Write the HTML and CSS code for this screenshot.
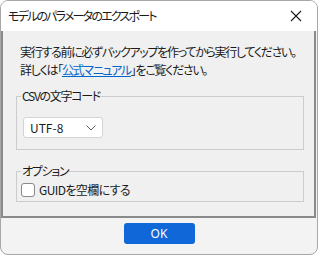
FILE: index.html
```html
<!DOCTYPE html>
<html>
<head>
    <title>モデルのパラメータのエクスポート</title>
    <link rel="stylesheet" href="styles.css">
</head>
<body>
    <div class="window">
        <div class="titlebar">
            <span class="title">モデルのパラメータのエクスポート</span>
            <svg class="close" width="12" height="12" viewBox="0 0 12 12">
                <path d="M1 1 L11 11 M11 1 L1 11" stroke="#1a1a1a" stroke-width="1.1" fill="none"/>
            </svg>
        </div>

        <div class="content">
            <p class="message">
                実行する前に必ずバックアップを作ってから実行してください。<br>
                詳しくは「<a href="#">公式マニュアル</a>」をご覧ください。
            </p>

            <fieldset class="group">
                <legend>CSVの文字コード</legend>
                <div class="select">
                    <span>UTF-8</span>
                    <svg width="10" height="6" viewBox="0 0 10 6">
                        <path d="M0.5 0.5 L5 5 L9.5 0.5" stroke="#606060" stroke-width="1" fill="none"/>
                    </svg>
                </div>
            </fieldset>

            <fieldset class="group options">
                <legend>オプション</legend>
                <label class="check">
                    <span class="box"></span>
                    <span class="check-text">GUIDを空欄にする</span>
                </label>
            </fieldset>
        </div>

        <div class="footer">
            <button class="ok">OK</button>
        </div>
    </div>
</body>
</html>
```

FILE: styles.css
```css
* {
    box-sizing: border-box;
}

body {
    margin: 0;
    font-family: 'Noto Sans CJK JP', 'Noto Sans', sans-serif;
    font-size: 12px;
    font-feature-settings: "palt";
    letter-spacing: -1.3px;
    color: #1a1a1a;
    background-color: #fff;
}

.window {
    width: 318px;
    height: 255px;
    border: 1px solid #a8a8a8;
    border-radius: 8px;
    overflow: hidden;
    display: flex;
    flex-direction: column;
    background-color: #f3f3f3;
}

.titlebar {
    height: 30px;
    background-color: #fff;
    display: flex;
    align-items: center;
    justify-content: space-between;
    padding: 0 15px 0 7px;
    flex-shrink: 0;
}

.title {
    font-size: 12px;
    line-height: 16px;
    letter-spacing: -1.8px;
}

.content {
    background-color: #f0f0f0;
    border: 2px solid #8a8a8a;
    border-top: none;
    margin-right: 1px;
    padding: 12px 10px 0 13px;
    height: 187px;
    flex-shrink: 0;
}

.message {
    margin: 0;
    padding-left: 4px;
    line-height: 18px;
    white-space: nowrap;
}

.message a {
    color: #0066cc;
    text-decoration: underline;
}

.group {
    border: 1px solid #cccccc;
    margin: 9px 0 0 0;
    padding: 13px 4px 11px 4px;
}

.group legend {
    padding: 0 1px;
    line-height: 16px;
}

.select {
    width: 80px;
    height: 21px;
    margin-left: 2px;
    background-color: #fff;
    border: 1px solid #d4d4d4;
    border-radius: 3px;
    display: flex;
    align-items: center;
    justify-content: space-between;
    padding: 0 6px 0 6px;
    letter-spacing: 0;
}

.options {
    margin-top: 13px;
    padding: 3px 4px 3px 4px;
}

.check {
    display: flex;
    align-items: center;
    line-height: 16px;
}

.check-text {
    letter-spacing: -0.6px;
}

.box {
    width: 14px;
    height: 14px;
    background-color: #fff;
    border: 1px solid #8a8a8a;
    border-radius: 3px;
    margin-right: 4px;
}

.footer {
    flex: 1;
    display: flex;
    justify-content: center;
    padding-top: 5px;
}

.ok {
    width: 71px;
    height: 21px;
    background-color: #0f67d8;
    color: #fff;
    border: none;
    border-radius: 3px;
    font-family: 'Noto Sans', sans-serif;
    font-size: 12px;
    letter-spacing: 0;
    padding: 0;
}
```
